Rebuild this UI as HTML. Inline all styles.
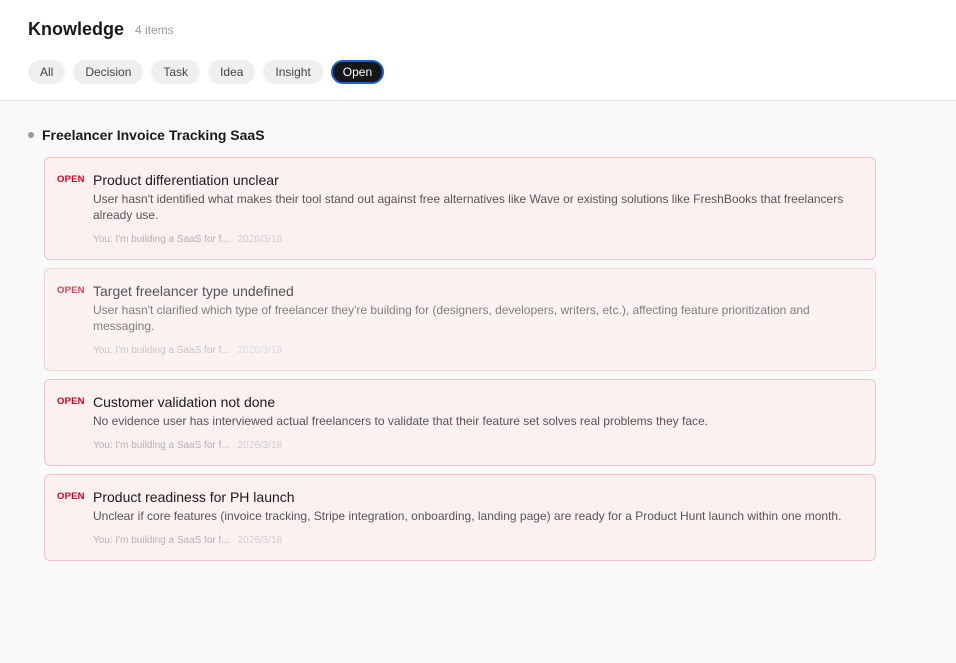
<!DOCTYPE html>
<html><head><meta charset="utf-8"><style>
*{box-sizing:border-box;margin:0;padding:0}
body{width:956px;height:663px;background:#f9f9f9;font-family:"Liberation Sans",Arial,sans-serif;overflow:hidden}
.hdr{background:#fff;height:101px;border-bottom:1px solid #e3e3e3;padding:0 28px;position:relative}
.t{position:absolute;left:28px;top:19px;font-size:18px;font-weight:bold;color:#1a1a1a}
.cnt{position:absolute;left:135px;top:23px;font-size:12px;color:#9a9a9a}
.chips{position:absolute;left:28px;top:60px;display:flex;gap:8px}
.chip{height:24px;line-height:24px;border-radius:12px;background:#efefef;color:#444;font-size:12px;padding:0 12px}
.chip.on{background:#161616;color:#fff;border:2px solid #1a5fd6;line-height:20px;padding:0 10px}
.grp{position:absolute;left:28px;top:127px;font-size:14px;font-weight:bold;color:#1a1a1a}
.grp:before{content:"";display:inline-block;width:6px;height:6px;border-radius:3px;background:#999;margin-right:8px;vertical-align:2px}
.cards{position:absolute;left:44px;top:157px;width:832px}
.card{background:#fdf0f0;border:1px solid #f6c4c6;border-radius:6px;padding:12px 12px 12px 12px;margin-bottom:8px;display:flex}
.card.f{opacity:.75}
.tag{width:36px;font-size:9.5px;font-weight:bold;color:#d0021b;line-height:20px;letter-spacing:.2px;flex:none}
.body{flex:1}
.tt{font-size:14px;line-height:20px;color:#1a1a1a}
.d{font-size:12px;line-height:16px;color:#555;margin-top:1px}
.m{font-size:10px;line-height:14px;color:#b4b4b4;margin-top:10px}
.m span{margin-left:8px;color:#cfcfcf}
</style></head><body>
<div class="hdr">
<div class="t">Knowledge</div><div class="cnt">4 items</div>
<div class="chips"><div class="chip">All</div><div class="chip">Decision</div><div class="chip">Task</div><div class="chip">Idea</div><div class="chip">Insight</div><div class="chip on">Open</div></div>
</div>
<div class="grp">Freelancer Invoice Tracking SaaS</div>
<div class="cards">
<div class="card"><div class="tag">OPEN</div><div class="body"><div class="tt">Product differentiation unclear</div><div class="d">User hasn't identified what makes their tool stand out against free alternatives like Wave or existing solutions like FreshBooks that freelancers already use.</div><div class="m">You: I'm building a SaaS for f...<span>2026/3/18</span></div></div></div>
<div class="card f"><div class="tag">OPEN</div><div class="body"><div class="tt">Target freelancer type undefined</div><div class="d">User hasn't clarified which type of freelancer they're building for (designers, developers, writers, etc.), affecting feature prioritization and messaging.</div><div class="m">You: I'm building a SaaS for f...<span>2026/3/18</span></div></div></div>
<div class="card"><div class="tag">OPEN</div><div class="body"><div class="tt">Customer validation not done</div><div class="d">No evidence user has interviewed actual freelancers to validate that their feature set solves real problems they face.</div><div class="m">You: I'm building a SaaS for f...<span>2026/3/18</span></div></div></div>
<div class="card"><div class="tag">OPEN</div><div class="body"><div class="tt">Product readiness for PH launch</div><div class="d">Unclear if core features (invoice tracking, Stripe integration, onboarding, landing page) are ready for a Product Hunt launch within one month.</div><div class="m">You: I'm building a SaaS for f...<span>2026/3/18</span></div></div></div>
</div>
</body></html>
